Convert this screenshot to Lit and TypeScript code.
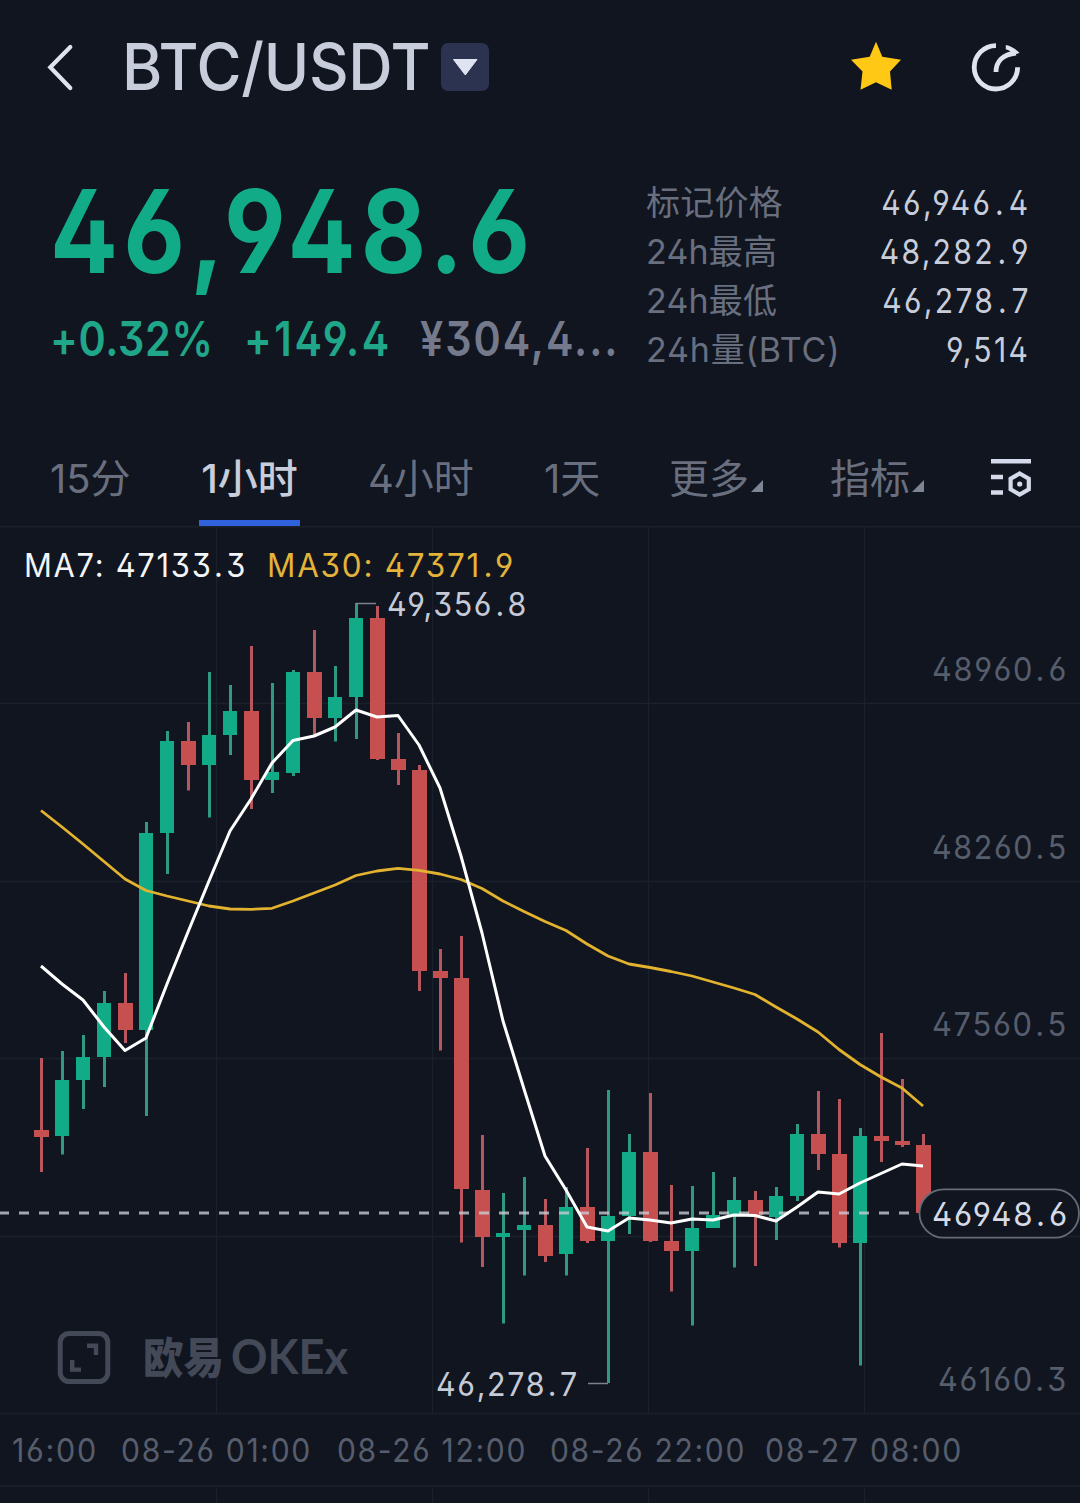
import { LitElement, html, svg, css } from "lit";
import { customElement } from "lit/decorators.js";

type Candle = [up: 0 | 1, high: number, low: number, top: number, bottom: number];

const CANDLES: Candle[] = [
  [0, 1058, 1172, 1130, 1137], [1, 1051, 1154.5, 1080, 1136], [1, 1035, 1109, 1057, 1080],
  [1, 991, 1087, 1003, 1057], [0, 973, 1043, 1003, 1030], [1, 822, 1116, 833, 1030],
  [1, 731, 874, 741, 833], [0, 722, 790.5, 741, 765], [1, 672, 817.5, 735, 765],
  [1, 685, 755, 711, 735], [0, 646, 809, 711, 780], [1, 683, 793, 772, 780],
  [1, 670, 776, 672, 773], [0, 630, 736, 672, 718], [1, 666, 741.5, 697, 718],
  [1, 603, 739, 618, 697], [0, 606, 760, 618, 759], [0, 733, 785, 759, 770],
  [0, 765, 991, 770, 971], [0, 949, 1050.5, 971, 978], [0, 936, 1242.5, 978, 1189],
  [0, 1135, 1267, 1190, 1237], [1, 1193, 1323.5, 1233, 1237], [1, 1177, 1275.5, 1225, 1230],
  [0, 1199, 1262, 1225, 1256], [1, 1187, 1275.5, 1207, 1254], [0, 1148, 1243, 1207, 1241],
  [1, 1090, 1383, 1216, 1241], [1, 1134, 1234, 1152, 1216], [0, 1093, 1242, 1152, 1241],
  [0, 1185, 1291.5, 1241, 1251], [1, 1186, 1325.5, 1228, 1251], [1, 1172, 1228, 1215, 1228],
  [1, 1177, 1267.5, 1200, 1216], [0, 1191, 1266, 1200, 1215], [1, 1187, 1240, 1196, 1217],
  [1, 1124, 1201, 1134, 1196], [0, 1091, 1170, 1134, 1154], [0, 1099, 1247.5, 1154, 1243],
  [1, 1128, 1365.5, 1136, 1243], [0, 1033, 1162, 1136, 1141], [0, 1079, 1147, 1141, 1145],
  [0, 1134, 1213, 1145, 1213],
];

const MA7 = [
  966, 984, 1000, 1027, 1050.5, 1038, 984, 932, 881, 831, 799, 763, 740.5, 736, 727, 710, 717,
  715.5, 745, 788, 856, 933, 1021, 1089, 1156, 1190, 1227, 1231, 1218, 1220, 1223, 1219, 1220,
  1215, 1215.5, 1221, 1207, 1192, 1194, 1183, 1173.5, 1164, 1166,
];

const MA30 = [
  810.5, 827, 844, 861.5, 879, 890.5, 896, 901, 906, 909, 909.3, 908.3, 901, 893, 885, 875.5, 871,
  868.3, 870.3, 874, 879.5, 888.5, 901, 911.5, 921.5, 930.5, 944, 956, 964, 967.5, 971.5, 976, 982,
  988, 994.5, 1007, 1019, 1032, 1049.5, 1064.5, 1077, 1088, 1106,
];

const centre = (i: number) => 41.5 + 21 * i;
const line = (ys: number[]) => ys.map((y, i) => `${centre(i) - 0.5},${y}`).join(" ");

const GRID_X = [216.5, 432.5, 648.5, 864.5];
const GRID_Y = [703.5, 881.5, 1058.5, 1236.5];

const PRICES: [string, number, number, number][] = [
  ["48960.6", 680.5, 932, 136], ["48260.5", 858.5, 932, 136],
  ["47560.5", 1035.5, 932, 136], ["46160.3", 1390.5, 938, 130],
];

const TIMES: [string, number, number][] = [
  ["16:00", 12, 86], ["08-26 01:00", 121, 191], ["08-26 12:00", 337, 190],
  ["08-26 22:00", 550, 196], ["08-27 08:00", 765, 198],
];

/** Chart label stretched to a given width, with extra room round the decimal point. */
const label = (cls: string, text: string, x: number, y: number, width: number) => {
  const dot = text.indexOf(".");
  const shifts = Array.from(text, (_, i) => (dot >= 0 && (i === dot || i === dot + 1) ? 2.4 : 0)).join(" ");
  return svg`<text class="num ${cls}" x=${x} y=${y} dx=${shifts} textLength=${width} lengthAdjust="spacingAndGlyphs">${text}</text>`;
};

@customElement("kline-chart")
export class KlineChart extends LitElement {
  static styles = css`
    :host { display: block; }
    svg { display: block; width: 1080px; height: 977px; }
    .num { font-family: Inter, "Noto Sans CJK SC", sans-serif; font-size: 32.5px; letter-spacing: 1.8px;
      font-feature-settings: "cv02", "cv03", "cv04", "cv09", "calt" 0; }
    .grid { stroke: #1b212c; stroke-width: 1.4; fill: none; }
    .up { fill: #12ab88; }
    .down { fill: #c64f50; }
    .wick.up { fill: #2f9a80; }
    .wick.down { fill: #b7565c; }
    .ma7 { fill: none; stroke: #fff; stroke-width: 3; stroke-linejoin: round; }
    .ma30 { fill: none; stroke: #e3b32f; stroke-width: 2.8; stroke-linejoin: round; }
    .now { stroke: #c9cbd2; stroke-opacity: .8; stroke-width: 2.8; stroke-dasharray: 10 10; }
    .axis { fill: #565d6c; }
    .mark { fill: #c5cad6; }
    .leader { stroke: #7c818d; stroke-width: 1.6; }
    .white { fill: #f4f5f8; }
    .gold { fill: #e3b33a; }
    .pill { fill: #10151f; stroke: #666b78; stroke-width: 1.8; }
    .pilltext { fill: #d5dae6; }
    .brand { fill: #434957; }
    .brand-line { fill: none; stroke: #434957; }
    .brand-cn { font: 900 43.5px "Noto Sans CJK SC", sans-serif; }
    .brand-en { font: 700 48px Lato, sans-serif; }
  `;

  render() {
    return html`<svg viewBox="0 526 1080 977">
      <path class="grid" d="M0 526.7H1080M0 1413.5H1080M0 1486H1080" />
      ${GRID_X.map((x) => svg`<path class="grid" d="M${x} 527V1413M${x} 1487V1503"/>`)}
      ${GRID_Y.map((y) => svg`<path class="grid" d="M0 ${y}H1080"/>`)}

      <rect class="brand-line" x="60.2" y="1333.5" width="47.6" height="48" rx="9" stroke-width="5" />
      <path class="brand-line" stroke-width="4.4" d="M87 1345.8H96V1355M72.2 1360V1369.6H81" />
      <text class="brand brand-cn" x="143" y="1374" textLength="81" lengthAdjust="spacingAndGlyphs">欧易</text>
      <text class="brand brand-en" x="231" y="1374" textLength="117" lengthAdjust="spacingAndGlyphs">OKEx</text>

      ${PRICES.map(([t, y, x, w]) => label("axis", t, x, y, w))}
      ${TIMES.map(([t, x, w]) => label("axis", t, x, 1462, w))}

      ${CANDLES.map(([up, high, low, top, bottom], i) => {
        const c = up ? "up" : "down";
        const x = centre(i);
        return svg`
          <rect class="wick ${c}" x=${x - 1.5} y=${high} width="3" height=${low - high} />
          <rect class=${c} x=${x - 7.5} y=${top} width=${up ? 14 : 15} height=${bottom - top} />`;
      })}

      <path class="leader" d="M356 603.5H376M588 1383.5H608" />
      <path class="now" d="M-1 1213H919" />
      <polyline class="ma30" points=${line(MA30)} />
      <polyline class="ma7" points=${line(MA7)} />

      ${label("white", "MA7: 47133.3", 24, 576.5, 223)}
      ${label("gold", "MA30: 47371.9", 267, 576.5, 248)}
      ${label("mark", "49,356.8", 387, 615.5, 141)}
      ${label("mark", "46,278.7", 436, 1395.5, 143)}

      <rect class="pill" x="919.5" y="1189.3" width="159.5" height="48.4" rx="24.2" />
      ${label("pilltext", "46948.6", 932, 1225.5, 137)}
    </svg>`;
  }
}

const STATS: [string, string, string][] = [
  ["标记价格", "46,946", "4"], ["24h最高", "48,282", "9"], ["24h最低", "46,278", "7"], ["24h量(BTC)", "9,514", ""],
];

@customElement("app-root")
export class AppRoot extends LitElement {
  static styles = css`
    :host { display: block; width: 1080px; height: 1503px; overflow: hidden; background: #10151f;
      font-family: Inter, "Noto Sans CJK SC", sans-serif; color: #c8cddb;
      font-feature-settings: "cv02", "cv03", "cv04", "cv09", "calt" 0; }
    svg { display: block; flex: none; }
    .header { display: flex; align-items: center; height: 134px; padding: 0 58px 0 46px; box-sizing: border-box; }
    .back { margin-right: 48px; }
    .pair { font-size: 65px; font-weight: 500; line-height: 80px; width: 319px; letter-spacing: -0.3px;
      white-space: nowrap; transform: scaleX(0.945); transform-origin: 0 50%; }
    .drop { margin-right: auto; }
    .star { margin: 0 68px 2px 0; }
    .quote { display: flex; height: 306px; }
    .main { width: 646px; padding: 40px 0 0 50px; box-sizing: border-box; }
    .price { font-size: 115px; font-weight: 700; line-height: 116px; color: #12ab88; white-space: nowrap;
      letter-spacing: 6px; transform: scaleX(0.875); transform-origin: 0 50%; }
    .changes { display: flex; margin-top: 20px; font-size: 48px; font-weight: 600; line-height: 58px; white-space: nowrap; color: #20a688; }
    .changes span { display: block; flex: none; transform: scaleX(0.86); transform-origin: 0 50%; }
    .pct { width: 194px; letter-spacing: 0.8px; }
    .diff { width: 176px; letter-spacing: 3px; }
    .cny { color: #747a8b; letter-spacing: 2.3px; }
    .stats { width: 382px; padding-top: 44px; }
    .stat { display: flex; justify-content: space-between; font-size: 34px; line-height: 49px; height: 49px; white-space: nowrap; }
    .label { color: #696f7f; letter-spacing: 0.2px; }
    .stat:last-child .label { letter-spacing: 0.8px; }
    .value { color: #c8cddb; letter-spacing: 2.6px; margin-right: -2.6px; transform: scaleX(0.885); transform-origin: 100% 50%; }
    .point { padding: 0 3px; }
    .tabs { display: grid; grid-template-columns: 149px 169px 176px 125px 161px 160px 42px; height: 86px;
      padding-left: 50px; box-sizing: border-box; font-size: 40px; line-height: 78px; color: #696f7f; }
    .tab { display: flex; white-space: nowrap; }
    .active { color: #c8cddb; font-weight: 500; }
    .activelabel { box-sizing: border-box; height: 86px; width: 101px; text-align: center; border-bottom: 6px solid #2f62dc; }
    .tri { margin: 40px 0 0 2px; }
    .set { margin-top: 18px; }
  `;

  private triangle() {
    return html`<svg class="tri" width="12" height="12"><path d="M12 0V12H0Z" fill="#7d8494" /></svg>`;
  }

  render() {
    return html`
      <div class="header">
        <svg class="back" width="28" height="48" viewBox="46 43 28 48"><path d="M70.3 47L50.3 67.3L70.3 88" fill="none" stroke="#dfe3ee" stroke-width="4.2" stroke-linecap="round" /></svg>
        <div class="pair">BTC/USDT</div>
        <svg class="drop" width="49" height="48" viewBox="0 0 49 48"><rect width="48" height="48" rx="7" fill="#2b3350" /><path d="M12.5 16.5H36L24.3 32Z" fill="#dfe3f2" stroke="#dfe3f2" stroke-linejoin="round" /></svg>
        <svg class="star" width="52" height="50" viewBox="850 41 52 50"><path d="M876 41.7L882.3 56.8L901 59.7L890 71.5L891.7 89.7L876 82.3L860.5 89.7L862.5 71.5L851 59.7L869.7 56.8Z" fill="#ffc814" /></svg>
        <svg width="52" height="50" viewBox="970 42.2 52 50"><g fill="none" stroke="#dfe3ee" stroke-width="4.8"><path d="M996 45.8A21.7 21.7 0 1 0 1017.6 67.5" /><path d="M996 72.3C996 61.5 1003 54.5 1016 53.2" /><path d="M1005.8 45.2V49.4Q1008.5 50 1011.5 52.6L1009.5 56.2L1019.6 53.2Q1013 46.5 1005.8 45.2Z" fill="#dfe3ee" stroke="none" /></g></svg>
      </div>
      <div class="quote">
        <div class="main">
          <div class="price">46,948.6</div>
          <div class="changes">
            <span class="pct">+0.32%</span><span class="diff">+149.4</span><span class="cny">¥304,4...</span>
          </div>
        </div>
        <div class="stats">
          ${STATS.map(([l, whole, frac]) => html`<div class="stat"><span class="label">${l}</span><span class="value">${whole}${frac ? html`<span class="point">.</span>${frac}` : ""}</span></div>`)}
        </div>
      </div>
      <div class="tabs">
        <div class="tab">15分</div>
        <div class="tab active"><div class="activelabel">1小时</div></div>
        <div class="tab">4小时</div>
        <div class="tab">1天</div>
        <div class="tab">更多${this.triangle()}</div>
        <div class="tab">指标${this.triangle()}</div>
        <svg class="set" width="42" height="40" viewBox="990 458 42 40"><path d="M991 461.3H1031M991 477H1003M991 492.5H1003" stroke="#d5daea" stroke-width="4.6" /><path d="M1019.7 473.5L1028.8 478.7V489.3L1019.7 494.6L1010.6 489.3V478.7Z" fill="none" stroke="#d5daea" stroke-width="4.2" /><circle cx="1019.7" cy="484" r="2.6" fill="#d5daea" /></svg>
      </div>
      <kline-chart></kline-chart>
    `;
  }
}
